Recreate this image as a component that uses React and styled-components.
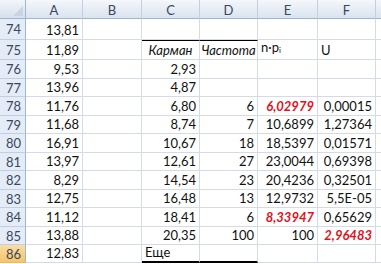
import React from "react";
import styled, { createGlobalStyle } from "styled-components";

const Global = createGlobalStyle`
  html, body { margin: 0; padding: 0; background: #fff; }
  body { font-family: Lato, "Open Sans", sans-serif; }
`;

const COLS = [26, 57, 59, 58, 58, 60, 58];
const ROW_H = [21, 20, 19, 18, 19, 18, 19, 18, 19, 18, 19, 18, 18];

const Sheet = styled.div`
  display: grid;
  grid-template-columns: ${COLS.map((c) => c + "px").join(" ")} 1fr;
  grid-template-rows: 19px ${ROW_H.map((h) => h + "px").join(" ")};
  width: 381px;
  height: 264px;
  overflow: hidden;
  font-size: 13px;
  color: #111;
`;

const Corner = styled.div`
  position: relative;
  background: linear-gradient(#f3f6fb, #d6dfec);
  border-right: 1px solid #9eb6ce;
  border-bottom: 1px solid #9eb6ce;
  box-sizing: border-box;
  svg { position: absolute; right: 2px; bottom: 2px; }
`;

const ColHead = styled.div`
  background: linear-gradient(#f4f7fb, #dae3ef);
  border-right: 1px solid #c3cfdf;
  border-bottom: 1px solid #9eb6ce;
  box-sizing: border-box;
  display: flex;
  align-items: center;
  justify-content: center;
  color: #3a475c;
  font-size: 13px;
  padding-top: 1px;
`;

const RowHead = styled.div`
  background: ${(p) =>
    p.$sel ? "linear-gradient(#fbdca2, #f5c46d)" : "#e4ecf7"};
  border-right: 1px solid #9eb6ce;
  border-bottom: 1px solid ${(p) => (p.$sel ? "#f1b753" : "#c3cfdf")};
  box-sizing: border-box;
  display: flex;
  align-items: center;
  padding-left: 6px;
  color: #3a475c;
  font-size: 13px;
`;

const Cell = styled.div`
  box-sizing: border-box;
  border-right: 1px solid #d4dbe6;
  border-bottom: ${(p) =>
    p.$bottom ? "2px solid #000" : "1px solid #d4dbe6"};
  border-top: ${(p) => (p.$top ? "1px solid #000" : "none")};
  display: flex;
  align-items: flex-end;
  justify-content: ${(p) =>
    p.$align === "left" ? "flex-start" : p.$align === "center" ? "center" : "flex-end"};
  padding: 0 3px 1px 3px;
  white-space: nowrap;
  overflow: visible;
  font-style: ${(p) => (p.$italic || p.$red ? "italic" : "normal")};
  font-weight: ${(p) => (p.$red ? 700 : 400)};
  color: ${(p) => (p.$red ? "#e3101c" : "#111")};
  line-height: 16px;
`;

const Sub = styled.span`
  font-size: 8px;
  vertical-align: -1px;
`;

const rows = [
  { n: 74, A: "13,81" },
  { n: 75, A: "11,89", C: { t: "Карман", italic: true, align: "center", top: true }, D: { t: "Частота", italic: true, align: "center", top: true }, E: { t: "np", align: "left" }, F: { t: "U", align: "left" } },
  { n: 76, A: "9,53", C: "2,93" },
  { n: 77, A: "13,96", C: "4,87" },
  { n: 78, A: "11,76", C: "6,80", D: "6", E: { t: "6,02979", red: true }, F: "0,00015" },
  { n: 79, A: "11,68", C: "8,74", D: "7", E: "10,6899", F: "1,27364" },
  { n: 80, A: "16,91", C: "10,67", D: "18", E: "18,5397", F: "0,01571" },
  { n: 81, A: "13,97", C: "12,61", D: "27", E: "23,0044", F: "0,69398" },
  { n: 82, A: "8,29", C: "14,54", D: "23", E: "20,4236", F: "0,32501" },
  { n: 83, A: "12,75", C: "16,48", D: "13", E: "12,9732", F: "5,5E-05" },
  { n: 84, A: "11,12", C: "18,41", D: "6", E: { t: "8,33947", red: true }, F: "0,65629" },
  { n: 85, A: "13,88", C: "20,35", D: "100", E: "100", F: { t: "2,96483", red: true } },
  { n: 86, A: "12,83", C: { t: "Еще", align: "left", bottom: true }, D: { t: "", bottom: true }, sel: true },
];

const letters = ["A", "B", "C", "D", "E", "F", "G"];

function renderCell(v, key) {
  if (v === undefined) return <Cell key={key} />;
  if (typeof v === "string") return <Cell key={key}>{v}</Cell>;
  let content = v.t;
  if (v.t === "np") {
    content = (
      <span>
        n·p<Sub>i</Sub>
      </span>
    );
  }
  return (
    <Cell
      key={key}
      $align={v.align}
      $italic={v.italic}
      $red={v.red}
      $top={v.top}
      $bottom={v.bottom}
    >
      {content}
    </Cell>
  );
}

export default function App() {
  return (
    <>
      <Global />
      <Sheet>
        <Corner>
          <svg width="10" height="10" viewBox="0 0 10 10">
            <polygon points="10,0 10,10 0,10" fill="#c9d3e2" />
          </svg>
        </Corner>
        {letters.map((l) => (
          <ColHead key={l}>{l === "G" ? "" : l}</ColHead>
        ))}
        {rows.map((r) => (
          <React.Fragment key={r.n}>
            <RowHead $sel={r.sel}>{r.n}</RowHead>
            {letters.map((c) => renderCell(r[c], r.n + c))}
          </React.Fragment>
        ))}
      </Sheet>
    </>
  );
}
